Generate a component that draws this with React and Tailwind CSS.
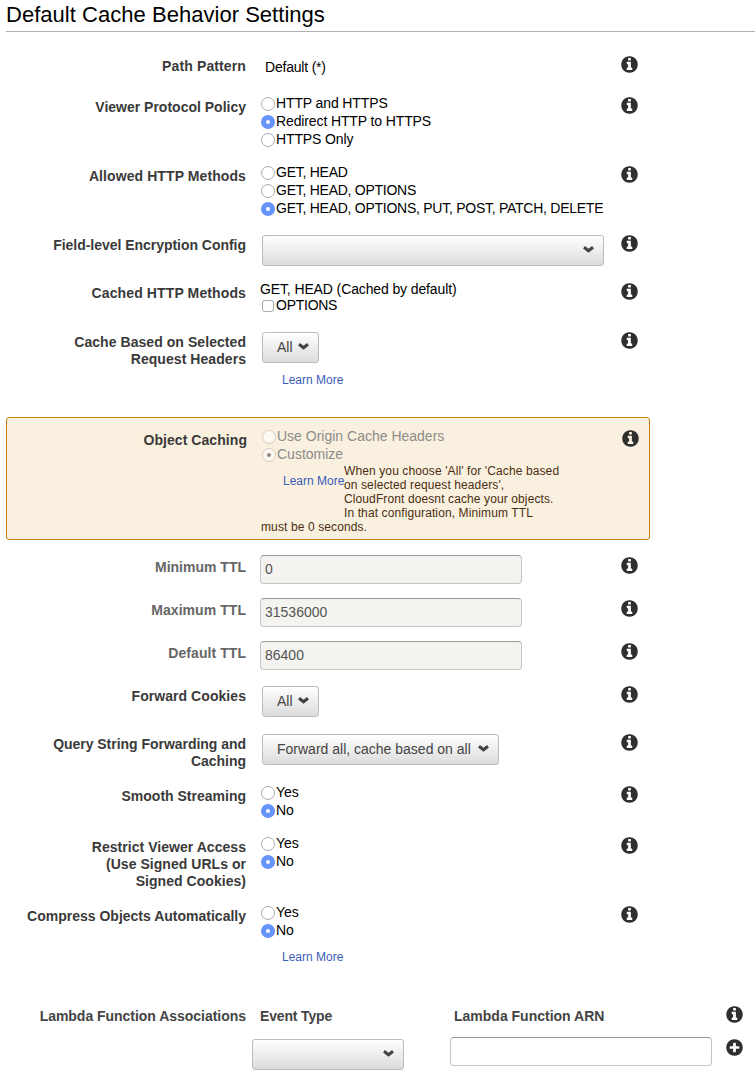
const DISC =
  "M1664 896q0 209-103 385.5t-279.5 279.5-385.5 103-385.5-103-279.5-279.5-103-385.5 103-385.5 279.5-279.5 385.5-103 385.5 103 279.5 279.5 103 385.5z";
const INFO =
  "M1152 1376v-160q0-14-9-23t-23-9h-96v-512q0-14-9-23t-23-9h-320q-14 0-23 9t-9 23v160q0 14 9 23t23 9h96v320h-96q-14 0-23 9t-9 23v160q0 14 9 23t23 9h448q14 0 23-9t9-23zM1024 480v-160q0-14-9-23t-23-9h-192q-14 0-23 9t-9 23v160q0 14 9 23t23 9h192q14 0 23-9t9-23z";
const PLUS =
  "M1344 960v-128q0-26-19-45t-45-19h-256v-256q0-26-19-45t-45-19h-128q-26 0-45 19t-19 45v256h-256q-26 0-45 19t-19 45v128q0 26 19 45t45 19h256v256q0 26 19 45t45 19h128q26 0 45-19t19-45v-256h256q26 0 45-19t19-45z";

function DiscIcon({ glyph, className = "" }) {
  return (
    <svg
      width="17"
      height="17"
      viewBox="104 104 1584 1584"
      fillRule="evenodd"
      className={`shrink-0 fill-[#2f2f2f] ${className}`}
    >
      <path d={glyph + DISC} />
    </svg>
  );
}

function Chevron({ className = "" }) {
  return (
    <svg width="11" height="7" viewBox="0 0 11 7" fill="none" className={`shrink-0 ${className}`}>
      <path d="M1 1.3 L5.5 4.7 L10 1.3" stroke="#444" strokeWidth="3.1" />
    </svg>
  );
}

function Row({ label, height, muted = false, tracking = "tracking-[0.06px]", children }) {
  return (
    <div className={`flex ${height}`}>
      <div
        className={`mt-[2px] w-60 shrink-0 text-right font-bold leading-[17px] whitespace-pre-line ${tracking} ${
          muted ? "text-[#666]" : "text-[#3a3a3a]"
        }`}
      >
        {label}
      </div>
      <div className="ml-[14px] w-[361px] shrink-0">{children}</div>
      <DiscIcon glyph={INFO} />
    </div>
  );
}

function Radio({ label, checked = false, disabled = false }) {
  const ring = disabled
    ? "border border-[#d5cdc0] bg-[#fdf8f0]"
    : checked
      ? "bg-[#6694fb]"
      : "border border-[#adadad] bg-white";
  const dot = disabled ? "bg-[#8d8a84]" : "bg-white";
  return (
    <label className={`flex h-[18px] items-start pl-px ${disabled ? "text-[#8c8c88]" : "text-black"}`}>
      <span className={`mt-[2px] flex size-[14px] items-center justify-center rounded-full ${ring}`}>
        {checked && <span className={`size-1 rounded-full ${dot}`} />}
      </span>
      <span className="ml-px leading-4">{label}</span>
    </label>
  );
}

function RadioGroup({ options, value, disabled, tracking = "" }) {
  return (
    <div className={`-mt-[2px] ${tracking}`}>
      {options.map((o) => (
        <Radio key={o} label={o} checked={o === value} disabled={disabled} />
      ))}
    </div>
  );
}

function Select({ label = "", width }) {
  return (
    <button
      className={`flex h-[31px] items-start justify-between rounded-[3px] border border-[#bcbcbc] bg-linear-to-b from-white to-[#dcdcdc] pr-[9px] pl-[14px] text-[#444] ${width}`}
    >
      <span className="mt-[6px] leading-4 whitespace-nowrap">{label}</span>
      <Chevron className="mt-[10px]" />
    </button>
  );
}

function TextField({ value = "", disabled = false }) {
  return (
    <input
      readOnly
      value={value}
      className={`block h-[29px] w-[262px] rounded-[4px] border border-[#c6c6c6] border-t-[#999] px-1 pb-[2px] text-[#555] outline-none ${
        disabled ? "bg-[#f4f3ef]" : "bg-white"
      }`}
    />
  );
}

function LearnMore() {
  return <a className="text-xs leading-[14px] text-[#3b5cb8]">Learn More</a>;
}

const YES_NO = ["Yes", "No"];

export default function App() {
  return (
    <div className="h-[1077px] w-[755px] overflow-hidden bg-white pl-[6px] font-['Liberation_Sans',Arial,sans-serif] text-sm text-black">
      <h1 className="h-8 border-b border-[#b0b0b0] pt-[2px] text-[22px] leading-[26px] tracking-[0.03px]">
        Default Cache Behavior Settings
      </h1>

      <div className="pt-6">
        <Row label="Path Pattern" height="h-[41px]" tracking="tracking-[0.12px]">
          <div className="mt-[3px] pl-[5px] leading-4 tracking-[-0.2px]">Default (*)</div>
        </Row>
        <Row label="Viewer Protocol Policy" height="h-[69px]" tracking="">
          <RadioGroup
            options={["HTTP and HTTPS", "Redirect HTTP to HTTPS", "HTTPS Only"]}
            value="Redirect HTTP to HTTPS"
            tracking="tracking-[-0.12px]"
          />
        </Row>
        <Row label="Allowed HTTP Methods" height="h-[69px]" tracking="tracking-[0.09px]">
          <RadioGroup
            options={["GET, HEAD", "GET, HEAD, OPTIONS", "GET, HEAD, OPTIONS, PUT, POST, PATCH, DELETE"]}
            value="GET, HEAD, OPTIONS, PUT, POST, PATCH, DELETE"
            tracking="tracking-[-0.26px]"
          />
        </Row>
        <Row label="Field-level Encryption Config" height="h-[48px]" tracking="tracking-[-0.03px]">
          <div className="pl-[2px]">
            <Select width="w-[342px]" />
          </div>
        </Row>
        <Row label="Cached HTTP Methods" height="h-[49px]" tracking="tracking-[0.12px]">
          <div className="-mt-[2px] leading-4 tracking-[-0.12px]">GET, HEAD (Cached by default)</div>
          <label className="flex pl-[2px] leading-4">
            <span className="mt-[3px] size-3 rounded-[3px] border border-[#a8a8a8] bg-white" />
            <span className="ml-[2px] tracking-[-0.26px]">OPTIONS</span>
          </label>
        </Row>
        <Row label={"Cache Based on Selected\nRequest Headers"} height="h-[85px]">
          <div className="pl-[2px]">
            <Select label="All" width="w-[57px]" />
          </div>
          <div className="mt-[10px] flex pl-[22px]">
            <LearnMore />
          </div>
        </Row>

        <div className="h-[123px] w-[644px] rounded-[3px] border border-[#c47f12] bg-[#faf0e0] pt-3">
          <Row label="Object Caching" height="h-[108px]">
            <RadioGroup options={["Use Origin Cache Headers", "Customize"]} value="Customize" disabled />
            <div className="text-xs leading-[14px] text-[#4a2e10] tracking-[0.11px]">
              <div className="float-left h-[56px] w-[83px] pt-[10px] pl-[22px] tracking-normal whitespace-nowrap">
                <LearnMore />
              </div>
              When you choose 'All' for 'Cache based
              <br />
              on selected request headers',
              <br />
              CloudFront doesnt cache your objects.
              <br />
              In that configuration, Minimum TTL
              <br />
              must be 0 seconds.
            </div>
          </Row>
        </div>

        <div className="pt-[17px]">
          <Row label="Minimum TTL" height="h-[43px]" tracking="" muted>
            <div className="-mt-[2px]">
              <TextField value="0" disabled />
            </div>
          </Row>
          <Row label="Maximum TTL" height="h-[43px]" muted>
            <div className="-mt-[2px]">
              <TextField value="31536000" disabled />
            </div>
          </Row>
          <Row label="Default TTL" height="h-[43px]" muted>
            <div className="-mt-[2px]">
              <TextField value="86400" disabled />
            </div>
          </Row>
        </div>

        <Row label="Forward Cookies" height="h-[48px]">
          <div className="pl-[2px]">
            <Select label="All" width="w-[57px]" />
          </div>
        </Row>
        <Row
          label={"Query String Forwarding and\nCaching"}
          height="h-[52px]"
          tracking="tracking-[-0.03px]"
        >
          <div className="pl-[2px]">
            <Select label="Forward all, cache based on all" width="w-[237px]" />
          </div>
        </Row>
        <Row label="Smooth Streaming" height="h-[51px]" tracking="">
          <RadioGroup options={YES_NO} value="No" />
        </Row>
        <Row label={"Restrict Viewer Access\n(Use Signed URLs or\nSigned Cookies)"} height="h-[69px]" tracking="tracking-[0.04px]">
          <RadioGroup options={YES_NO} value="No" />
        </Row>
        <Row label="Compress Objects Automatically" height="h-[100px]" tracking="">
          <RadioGroup options={YES_NO} value="No" />
          <div className="mt-[10px] flex pl-[22px]">
            <LearnMore />
          </div>
        </Row>

        <div className="flex h-[31px] font-bold text-[#444]">
          <div className="mt-[2px] w-60 text-right leading-[17px] tracking-[-0.03px]">
            Lambda Function Associations
          </div>
          <div className="mt-[2px] ml-[14px] w-[194px] leading-[17px] tracking-[-0.15px]">Event Type</div>
          <div className="mt-[2px] w-[272px] leading-[17px]">Lambda Function ARN</div>
          <DiscIcon glyph={INFO} />
        </div>
        <div className="flex items-start pl-[246px]">
          <div className="mt-[2px]">
            <Select width="w-[152px]" />
          </div>
          <div className="ml-[46px]">
            <TextField />
          </div>
          <DiscIcon glyph={PLUS} className="mt-[2px] ml-[14px]" />
        </div>
      </div>
    </div>
  );
}
